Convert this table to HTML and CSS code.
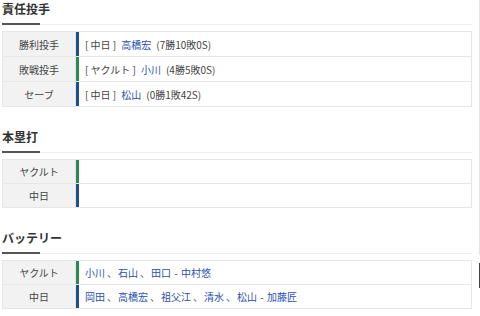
FILE: index.html
```html
<!DOCTYPE html>
<html lang="ja">
<head>
<meta charset="utf-8">
<title>試合結果</title>
<link rel="stylesheet" href="styles.css">
</head>
<body>
<div class="page">
  <main class="main">
    <section class="sec sec-first">
      <h2 class="sec-title">責任投手</h2>
      <div class="tbl">
        <div class="lbl">勝利投手</div>
        <div class="val bar-blue"><span class="team">[ 中日 ]</span><a class="lnk">高橋宏</a><span class="rec">(7勝10敗0S)</span></div>
        <div class="lbl">敗戦投手</div>
        <div class="val bar-green"><span class="team">[ ヤクルト ]</span><a class="lnk">小川</a><span class="rec">(4勝5敗0S)</span></div>
        <div class="lbl">セーブ</div>
        <div class="val bar-blue"><span class="team">[ 中日 ]</span><a class="lnk">松山</a><span class="rec">(0勝1敗42S)</span></div>
      </div>
    </section>
    <section class="sec">
      <h2 class="sec-title">本塁打</h2>
      <div class="tbl tbl-short">
        <div class="lbl">ヤクルト</div>
        <div class="val bar-green"></div>
        <div class="lbl">中日</div>
        <div class="val bar-blue"></div>
      </div>
    </section>
    <section class="sec">
      <h2 class="sec-title">バッテリー</h2>
      <div class="tbl tbl-short">
        <div class="lbl">ヤクルト</div>
        <div class="val bar-green"><a class="lnk">小川</a><span class="sep">、</span><a class="lnk">石山</a><span class="sep">、</span><a class="lnk">田口</a><span class="dash">-</span><a class="lnk">中村悠</a></div>
        <div class="lbl">中日</div>
        <div class="val bar-blue"><a class="lnk">岡田</a><span class="sep">、</span><a class="lnk">高橋宏</a><span class="sep">、</span><a class="lnk">祖父江</a><span class="sep">、</span><a class="lnk">清水</a><span class="sep">、</span><a class="lnk">松山</a><span class="dash">-</span><a class="lnk">加藤匠</a></div>
      </div>
    </section>
  </main>
  <div class="edge"></div>
</div>
</body>
</html>
```

FILE: styles.css
```css
html, body {
  margin: 0;
  padding: 0;
  background: #fff;
}
body {
  font-family: "Noto Sans CJK JP", "Noto Sans", "Liberation Sans", sans-serif;
  color: #444;
  font-size: 10px;
}
.page {
  display: flex;
  width: 480px;
  height: 316px;
  overflow: hidden;
}
.main {
  width: 470px;
  padding-left: 2px;
}
.edge {
  margin-left: auto;
  width: 1px;
  height: 316px;
  background: linear-gradient(to bottom, #e6e6e6 0, #e6e6e6 255px, #fff 255px, #fff 263px, #444 263px, #444 288px, #fff 288px);
}
.sec {
  margin-top: 22px;
}
.sec-first {
  margin-top: 1px;
}
.sec-title {
  margin: 0;
  font-size: 12px;
  line-height: 16px;
  font-weight: bold;
  color: #333;
}
.sec-title::after {
  content: "";
  display: block;
  height: 2px;
  margin-top: 6px;
  background:
    linear-gradient(#555, #555) 0 0 / 38px 2px no-repeat,
    linear-gradient(#eee, #eee) 0 1px / 100% 1px no-repeat;
}
.sec-first .sec-title::after {
  margin-top: 6px;
}
.tbl {
  margin-top: 6px;
  display: grid;
  grid-template-columns: 72px 1fr;
  grid-auto-rows: 24px;
  gap: 1px;
  background: #e6e6e6;
  border: 1px solid #e6e6e6;
}
.tbl-short {
  grid-auto-rows: 23px;
}
.lbl {
  background: #f2f2f2;
  display: flex;
  align-items: center;
  justify-content: center;
  font-size: 10px;
  color: #444;
}
.val {
  background: #fff;
  display: flex;
  align-items: center;
  padding-left: 6px;
  border-left: 3px solid #1c4f90;
  font-size: 10px;
  white-space: nowrap;
}
.bar-blue {
  border-left-color: #1c4f90;
}
.bar-green {
  border-left-color: #2b8a50;
}
.team {
  color: #444;
  margin-right: 5px;
}
.lnk {
  color: #2a4fb4;
  text-decoration: none;
}
.rec {
  color: #444;
  margin-left: 5px;
}
.sep {
  display: inline-block;
  width: 11px;
  padding-left: 2px;
  overflow: hidden;
  color: #555;
}
.dash {
  display: inline-block;
  width: 10px;
  text-align: center;
  color: #444;
}
```
